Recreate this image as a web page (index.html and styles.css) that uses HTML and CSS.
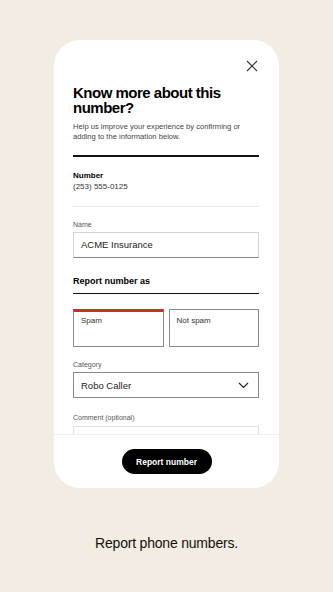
FILE: index.html
```html
<!DOCTYPE html>
<html lang="en">
<head>
  <meta charset="UTF-8" />
  <meta name="viewport" content="width=device-width, initial-scale=1.0"/>
  <title>Report number</title>
  <link rel="stylesheet" href="styles.css">
</head>
<body>

  <div class="screen">
    <div class="card">
      <div class="card-body">
        <div class="close-row">
          <button class="close-btn" aria-label="Close">
            <svg width="12" height="12" viewBox="0 0 12 12">
              <path d="M1 1 L11 11 M11 1 L1 11" stroke="#333" stroke-width="1.1" fill="none"/>
            </svg>
          </button>
        </div>

        <h1>Know more about this number?</h1>
        <p class="intro">Help us improve your experience by confirming or adding to the information below.</p>

        <div class="rule-dark"></div>

        <div class="number-block">
          <div class="number-label">Number</div>
          <div class="number-value">(253) 555-0125</div>
        </div>

        <div class="rule-light"></div>

        <label class="field-label">Name</label>
        <div class="input">ACME Insurance</div>

        <h2>Report number as</h2>
        <div class="rule-section"></div>

        <div class="choices">
          <div class="choice selected">Spam</div>
          <div class="choice">Not spam</div>
        </div>

        <label class="field-label">Category</label>
        <div class="input select">
          <span>Robo Caller</span>
          <svg width="11" height="7" viewBox="0 0 11 7">
            <path d="M1 1 L5.5 5.5 L10 1" stroke="#222" stroke-width="1.1" fill="none"/>
          </svg>
        </div>

        <label class="field-label comment-label">Comment (optional)</label>
        <div class="textarea"></div>
      </div>

      <div class="card-footer">
        <button class="report-btn">Report number</button>
      </div>
    </div>

    <p class="caption">Report phone numbers.</p>
  </div>

</body>
</html>
```

FILE: styles.css
```css
* {
  margin: 0; padding: 0; box-sizing: border-box;
  font-family: 'Liberation Sans', Arial, sans-serif;
}
body {
  background: #f2ece2;
  color: #000;
  width: 333px;
  height: 592px;
  overflow: hidden;
}
.screen {
  padding-top: 40px;
  display: flex;
  flex-direction: column;
  align-items: center;
}
.card {
  width: 225px;
  height: 448px;
  background: #fff;
  border-radius: 26px;
  overflow: hidden;
  display: flex;
  flex-direction: column;
}
.card-body {
  flex: 1;
  overflow: hidden;
  padding: 20px 20px 0 19px;
}
.close-row {
  display: flex;
  justify-content: flex-end;
  padding-right: 1px;
}
.close-btn {
  background: none;
  border: none;
  width: 12px;
  height: 12px;
  display: block;
}
.close-btn svg {
  display: block;
}
h1 {
  margin-top: 13px;
  font-size: 15px;
  line-height: 15px;
  font-weight: 700;
  letter-spacing: -0.5px;
  width: 160px;
}
.intro {
  margin-top: 7px;
  font-size: 7.6px;
  line-height: 10px;
  color: #444;
}
.rule-dark {
  margin-top: 13px;
  height: 1.5px;
  background: #111;
}
.number-block {
  padding-top: 13px;
}
.number-label {
  font-size: 8px;
  font-weight: 700;
  line-height: 11px;
}
.number-value {
  font-size: 8px;
  line-height: 11px;
  color: #333;
}
.rule-light {
  margin-top: 14px;
  height: 1px;
  background: #e8e8e8;
}
.field-label {
  display: block;
  margin-top: 13px;
  font-size: 7px;
  line-height: 10px;
  color: #555;
}
.input {
  margin-top: 2px;
  height: 26px;
  border: 1px solid #d4d4d4;
  border-bottom: 1px solid #888;
  padding: 0 7px;
  display: flex;
  align-items: center;
  font-size: 9.5px;
  color: #222;
}
h2 {
  margin-top: 17px;
  font-size: 9px;
  line-height: 12px;
  font-weight: 700;
}
.rule-section {
  margin-top: 6px;
  height: 1.5px;
  background: #111;
}
.choices {
  margin-top: 15px;
  display: grid;
  grid-template-columns: 1fr 1fr;
  gap: 5px;
}
.choice {
  height: 38px;
  border: 1px solid #8a8a8a;
  padding: 6px 7px;
  font-size: 8px;
  line-height: 10px;
  color: #333;
}
.choice.selected {
  border-top: 3px solid #d52b1e;
  padding-top: 4px;
}
.select {
  justify-content: space-between;
  border: 1px solid #8a8a8a;
  font-size: 9.5px;
  padding-right: 9px;
}
.comment-label {
  margin-top: 15px;
}
.textarea {
  margin-top: 3px;
  height: 30px;
  border: 1px solid #e0e0e0;
}
.card-footer {
  height: 54px;
  border-top: 1px solid #eee;
  display: flex;
  justify-content: center;
  padding-top: 14px;
}
.report-btn {
  width: 90px;
  height: 25px;
  border: none;
  border-radius: 13px;
  background: #000;
  color: #fff;
  font-size: 8.5px;
  font-weight: 700;
}
.caption {
  margin-top: 46px;
  font-size: 14px;
  line-height: 18px;
  color: #111;
  letter-spacing: -0.2px;
}
```
